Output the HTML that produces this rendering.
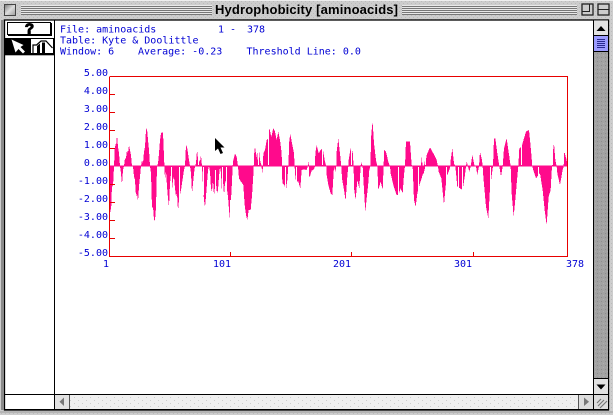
<!DOCTYPE html>
<html><head><meta charset="utf-8"><title>Hydrophobicity</title>
<style>
html,body{margin:0;padding:0;background:#ccc;width:613px;height:415px;overflow:hidden}
svg{display:block}
.m{font-family:"DejaVu Sans Mono","Liberation Mono",monospace;font-size:10px;fill:#0000d4}
.e{text-anchor:end}
.c{text-anchor:middle}
</style></head><body>
<svg width="613" height="415" viewBox="0 0 613 415" xmlns="http://www.w3.org/2000/svg">
<defs>
<pattern id="d1" width="4" height="4" patternUnits="userSpaceOnUse"><rect width="4" height="4" fill="#cdcdcd"/><rect x="1" y="1" width="1" height="1" fill="#bbb"/><rect x="3" y="3" width="1" height="1" fill="#bbb"/></pattern>
<pattern id="d2" width="4" height="4" patternUnits="userSpaceOnUse"><rect width="4" height="4" fill="#a2a2a2"/><rect x="1" y="1" width="1" height="1" fill="#8c8c8c"/><rect x="3" y="3" width="1" height="1" fill="#b0b0b0"/></pattern>
<pattern id="d3" width="8" height="6" patternUnits="userSpaceOnUse"><rect width="8" height="6" fill="#efefef"/><rect x="2" y="1" width="1" height="1" fill="#ccc"/><rect x="6" y="4" width="1" height="1" fill="#ccc"/></pattern>
<pattern id="st" width="2" height="2" patternUnits="userSpaceOnUse"><rect width="2" height="2" fill="#e8e8e8"/><rect width="2" height="1" fill="#777"/></pattern>
<linearGradient id="g1" x1="0" y1="0" x2="1" y2="1"><stop offset="0" stop-color="#777"/><stop offset=".5" stop-color="#ddd"/><stop offset="1" stop-color="#999"/></linearGradient>
</defs>
<rect width="613" height="415" fill="url(#d1)"/>
<rect x="0" y="0" width="613" height="1" fill="#eee"/>
<!-- title bar -->
<rect x="4.500" y="4.500" width="11" height="11" fill="url(#g1)" stroke="#444" stroke-width="1"/>
<rect x="21" y="5" width="191" height="10" fill="url(#st)"/>
<rect x="402" y="5" width="175" height="10" fill="url(#st)"/>
<text x="215" y="14" font-family="Liberation Sans,sans-serif" font-weight="700" font-size="13" fill="#000" textLength="183" lengthAdjust="spacing">Hydrophobicity [aminoacids]</text>
<rect x="582" y="4" width="11" height="11" fill="#ccc" stroke="#222" stroke-width="1.300"/>
<path d="M582 11.500H589.500V4" fill="none" stroke="#222"/>
<rect x="598" y="4" width="11" height="11" fill="#ccc" stroke="#222" stroke-width="1.300"/>
<path d="M598 9.500H609" stroke="#222"/>
<!-- content frame -->
<rect x="4.500" y="20" width="604" height="390" fill="#fff" stroke="#000" stroke-width="1.300"/>
<rect x="1" y="20" width="3" height="390" fill="#8a8a8a"/>
<rect x="0" y="411" width="613" height="2" fill="#b5b5b5"/>
<rect x="54" y="20" width="1" height="390" fill="#000"/>
<!-- tool column -->
<rect x="7.500" y="22.500" width="43" height="12" fill="#fff" stroke="#000"/>
<path d="M52 23V36H8V35H51V23Z" fill="#000"/>
<text x="29.500" y="33.500" font-family="Liberation Sans,sans-serif" font-weight="700" font-size="15" class="c" fill="#000" stroke="#000" stroke-width="1.100" text-anchor="middle">?</text>
<rect x="5" y="38" width="25" height="16" fill="#000"/>
<path d="M11.500 39.500L23.500 45L20.500 47L25 51.500L23 53.500L18.500 49L15.500 52.500Z" fill="#fff"/>
<rect x="30.500" y="38.500" width="23" height="15" fill="#fff" stroke="#000"/>
<path d="M33 53V45H36.500L41 41H46L52.500 48" fill="none" stroke="#000" stroke-width="1.200"/>
<path d="M37 53V46L40 43.500V53ZM42 53V42.500H45V53Z" fill="#000"/>
<rect x="5" y="54" width="50" height="1.300" fill="#000"/>
<!-- info text -->
<text class="m" x="60" y="32.500">File: aminoacids</text>
<text class="m" x="218" y="32.500">1 -</text>
<text class="m" x="247" y="32.500">378</text>
<text class="m" x="60" y="43.500">Table: Kyte &amp; Doolittle</text>
<text class="m" x="60" y="54.500">Window: 6</text>
<text class="m" x="138" y="54.500">Average: -0.23</text>
<text class="m" x="246.500" y="54.500">Threshold Line: 0.0</text>
<!-- y labels -->
<g class="m">
<text class="m e" x="108" y="76">5.00</text>
<text class="m e" x="108" y="94">4.00</text>
<text class="m e" x="108" y="112">3.00</text>
<text class="m e" x="108" y="130">2.00</text>
<text class="m e" x="108" y="148">1.00</text>
<text class="m e" x="108" y="166">0.00</text>
<text class="m e" x="108" y="184">-1.00</text>
<text class="m e" x="108" y="202">-2.00</text>
<text class="m e" x="108" y="220">-3.00</text>
<text class="m e" x="108" y="238">-4.00</text>
<text class="m e" x="108" y="256">-5.00</text>
<text class="m c" x="106" y="267">1</text>
<text class="m c" x="222" y="267">101</text>
<text class="m c" x="342" y="267">201</text>
<text class="m c" x="463" y="267">301</text>
<text class="m c" x="575" y="267">378</text>
</g>
<!-- chart data -->
<g fill="#ff0a8c" shape-rendering="crispEdges">
<polygon transform="matrix(1 0 0 .3333 0 130)" points="110,108 110,235 111,250 112,165 113,170 114,110 115,40 116,50 117,15 118,50 119,70 120,108 121,130 122,165 123,120 124,108 125,85 126,85 127,60 128,70 129,45 130,60 131,75 132,108 133,110 134,140 135,150 136,200 137,190 138,215 139,170 140,140 141,108 142,90 143,100 144,65 145,50 146,0 147,-5 148,30 149,60 150,108 151,130 152,235 153,230 154,270 155,272 156,232 157,110 158,100 159,70 160,30 161,10 162,7 163,8 164,80 165,150 166,120 167,170 168,205 169,232 170,160 171,130 172,180 173,150 174,140 175,175 176,200 177,190 178,242 179,210 180,195 181,180 182,160 183,140 184,120 185,108 186,45 187,50 188,70 189,90 190,108 191,130 192,190 193,160 194,130 195,108 196,100 197,60 198,85 199,90 200,95 201,75 202,108 203,170 204,210 205,232 206,200 207,160 208,120 209,108 210,125 211,175 212,185 213,150 214,197 215,170 216,160 217,190 218,180 219,140 220,110 221,130 222,190 223,150 224,195 225,160 226,150 227,180 228,200 229,240 230,270 230,108"/>
<polygon transform="translate(230 110) scale(.3333)" points="0,169 0,270 3,270 6,215 8,169 9,155 15,130 20,140 24,169 27,205 33,215 40,225 44,285 48,315 52,330 56,300 62,300 66,258 70,195 71,169 72,135 75,110 78,130 82,150 85,100 90,150 94,165 97,190 99,169 100,130 105,120 110,90 115,85 118,55 124,80 130,55 135,65 140,90 145,65 150,90 155,130 156,169 157,220 163,225 168,240 172,210 175,169 178,90 181,72 186,100 192,130 194,169 195,190 198,215 205,215 211,235 215,180 222,178 230,180 233,169 235,155 237,169 238,205 245,182 252,178 255,169 256,130 260,105 266,130 272,120 278,115 285,155 289,169 290,195 295,225 302,250 307,255 312,170 316,185 319,169 320,125 325,85 330,130 334,169 336,205 342,240 347,272 352,200 355,169 356,150 362,115 368,125 371,169 372,235 377,270 382,210 388,235 392,169 393,155 398,169 400,205 406,305 410,265 414,230 418,180 421,169 424,70 428,35 432,100 438,150 442,169 445,240 452,215 458,240 461,169 462,120 468,125 475,155 480,169 482,190 490,225 500,255 505,255 512,235 518,250 522,195 525,169 528,95 540,95 545,165 548,169 552,270 557,290 562,250 570,220 578,195 582,169 585,150 595,135 600,169"/>
<polygon transform="translate(420 110) scale(.3333)" points="0,169 0,220 3,169 5,140 8,169 10,195 16,169 20,135 30,112 40,130 50,150 54,169 56,185 64,205 72,285 75,250 80,200 88,180 91,169 92,150 97,115 102,160 106,169 112,230 120,235 128,240 135,195 138,169 140,155 144,169 148,185 152,169 157,135 163,165 168,169 172,195 177,169 180,125 186,150 188,169 190,200 198,290 205,325 210,235 216,190 219,169 222,85 226,85 232,130 238,169 243,200 248,169 252,115 260,85 268,140 272,169 275,250 281,320 285,280 292,200 295,169 298,115 305,110 312,85 318,65 327,60 332,110 337,169 340,180 348,205 360,190 368,240 374,300 380,345 386,260 392,240 396,169 398,130 402,100 406,150 410,169 412,190 420,225 428,180 431,169 433,125 440,150 442,169"/>
</g>
<!-- gaps between the bars -->
<path shape-rendering="crispEdges" stroke="#fff" fill="none" d="M124.500 167V200M141.500 167V200M168.500 135V165M171.500 167V195M179.500 167V205M189.500 167V200M195.500 167V200M198.500 140V165M203.500 167V195M215.500 170V200M222.500 167V200M226.500 167V200M241.500 145V165M253.500 130V165M258.500 130V165M268.500 130V165M285.500 167V195M296.500 167V195M312.500 140V165M322.500 140V165M336.500 167V200M351.500 140V165M361.500 167V205M369.500 135V165M373.500 167V205M398.500 167V195M407.500 167V200M418.500 167V200M425.500 140V165M439.500 140V165M446.500 167V195M458.500 167V195M462.500 167V195M490.500 167V205M516.500 130V165M521.500 130V165M538.500 167V205M552.500 135V165"/>
<!-- red frame -->
<path d="M109.500 166H567" stroke="#ff0a8c" fill="none"/>
<path d="M110 76.500H567.500V256.500H109.500V76.500" fill="none" stroke="#e80000"/>
<path d="M110 94.500h5M110 112.500h5M110 130.500h5M110 148.500h5M110 184.500h5M110 202.500h5M110 220.500h5M110 238.500h5M230.500 252v4M351.500 252v4M473.500 252v4" stroke="#e80000" fill="none"/>
<!-- cursor -->
<path d="M215 138V151L218 148.500L220.500 154L223 153L220.500 147.500L224.500 147.500Z" fill="#000"/>
<!-- right scrollbar -->
<rect x="593" y="20.500" width="15" height="374" fill="#fff"/>
<rect x="593" y="20" width="1" height="390" fill="#000"/>
<rect x="594" y="21" width="14" height="14" fill="#e2e2e2"/>
<path d="M596.500 31L601 26L605.500 31Z" fill="#000"/>
<rect x="593" y="35" width="15" height="1" fill="#000"/>
<rect x="594" y="36" width="14" height="15" fill="#9c9cff"/>
<path d="M597 39.500h8M597 41.500h8M597 43.500h8M597 45.500h8M597 47.500h8" stroke="#2a2a90"/>
<rect x="593" y="51" width="15" height="1" fill="#000"/>
<rect x="594" y="52" width="14" height="326" fill="url(#d2)"/>
<rect x="593" y="378" width="15" height="1" fill="#000"/>
<rect x="594" y="379" width="14" height="15" fill="#e2e2e2"/>
<path d="M596.500 384.500H605.500L601 389.500Z" fill="#000"/>
<!-- bottom scrollbar -->
<rect x="4" y="394" width="604" height="1" fill="#000"/>
<rect x="55" y="395" width="14" height="14" fill="#e2e2e2"/>
<path d="M64 397.500V406L59.500 401.800Z" fill="#777"/>
<rect x="69" y="395" width="1" height="14" fill="#555"/>
<rect x="70" y="395" width="508" height="14" fill="url(#d3)"/>
<rect x="578" y="395" width="1" height="14" fill="#555"/>
<rect x="579" y="395" width="14" height="14" fill="#ddd"/>
<path d="M584 397.500V406L589 401.800Z" fill="#777"/>
<rect x="593" y="395" width="15" height="14" fill="#ddd"/>
<path d="M598 406L604 400M600 408L607 401M597 403L601 399" stroke="#777" stroke-width="1.200" fill="none"/>
<rect x="593" y="394" width="1" height="16" fill="#000"/>
<rect x="4" y="409" width="605" height="1.300" fill="#000"/>
<rect x="608" y="20" width="1" height="390" fill="#000"/>
</svg>
</body></html>
